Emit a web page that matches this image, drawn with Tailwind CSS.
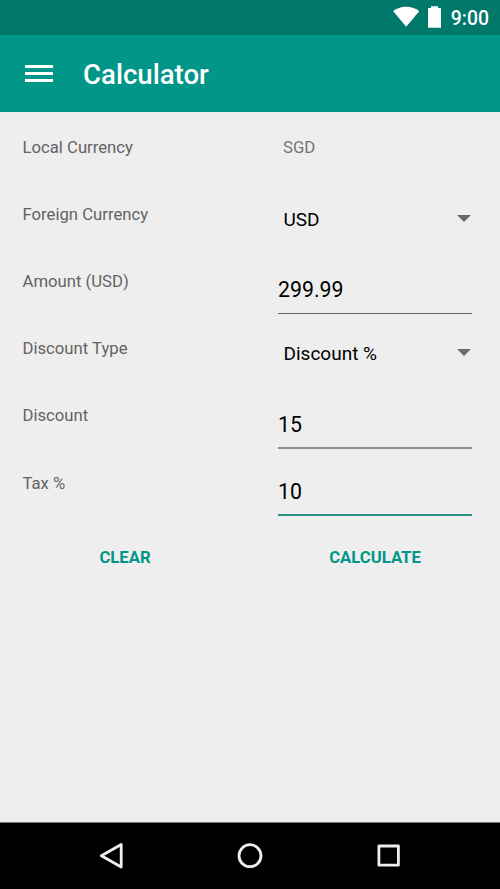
<!DOCTYPE html>
<html lang="en">
<head>
<meta charset="utf-8">
<title>Calculator</title>
<script src="https://cdn.jsdelivr.net/npm/@tailwindcss/browser@4"></script>
</head>
<body class="font-['Roboto',sans-serif]">
<div class="flex h-[889px] w-[500px] flex-col overflow-hidden bg-[#eeeeee]">
  <div class="flex h-[35px] shrink-0 items-center justify-end bg-[#00796b] pr-[11px] text-white">
    <svg class="h-[35px] w-[57px]" viewBox="0 0 57 35" fill="currentColor"><path d="M.2 11.2C3.5 8.300 8 6.700 13.200 6.700s9.700 1.600 13 4.500L13.200 26.800z"/><path d="M35 8h3V6.300h7V8h3v19.700H35z"/></svg>
    <span class="relative top-px ml-[1px] text-[19.4px] font-medium">9:00</span>
  </div>
  <header class="flex h-[77px] shrink-0 items-center bg-[#009688] pl-[25px] text-white">
    <svg class="h-[18px] w-7" viewBox="0 0 28 18" fill="currentColor"><path d="M0 0h28v3H0zM0 7h28v3H0zM0 14h28v3H0z"/></svg>
    <h1 class="relative top-px ml-[30px] text-[27.6px] font-medium">Calculator</h1>
  </header>
  <main class="flex-1">
    <div class="grid auto-rows-[67.2px] grid-cols-[255.500px_194px] pl-[22.500px] text-black">
      <div class="pt-[26px] text-[16.700px] leading-5 text-[#636363]">Local Currency</div>
      <div class="pt-[26px] pl-[5px] text-[16.700px] leading-5 text-[#757575]">SGD</div>

      <div class="pt-[26px] text-[16.700px] leading-5 text-[#636363]">Foreign Currency</div>
      <div class="flex items-center justify-between pt-[14px] pr-[1.500px] pl-[5.500px] text-[19px]"><span>USD</span><svg class="relative -top-[1.500px] h-[7px] w-[14px]" viewBox="0 0 14 7" fill="#6b6b6b"><path d="M0 0h14L7 7z"/></svg></div>

      <div class="pt-[26px] text-[16.700px] leading-5 text-[#636363]">Amount (USD)</div>
      <div class="border-b border-[#666666] pt-[31px] text-[21.300px] leading-[26px]">299.99</div>

      <div class="pt-[25.500px] text-[16.700px] leading-5 text-[#636363]">Discount Type</div>
      <div class="flex items-center justify-between pt-[14px] pr-[1.500px] pl-[5.500px] text-[19px]"><span>Discount %</span><svg class="relative -top-[1.500px] h-[7px] w-[14px]" viewBox="0 0 14 7" fill="#6b6b6b"><path d="M0 0h14L7 7z"/></svg></div>

      <div class="pt-[25.500px] text-[16.700px] leading-5 text-[#636363]">Discount</div>
      <div class="mb-[-1px] border-b-2 border-[#929292] pt-[31px] text-[21.300px] leading-[26px]">15</div>

      <div class="pt-[26px] text-[16.700px] leading-5 text-[#636363]">Tax %</div>
      <div class="mb-[-1.200px] border-b-2 border-[#2d9389] pt-[31px] text-[21.300px] leading-[26px]">10</div>
    </div>
    <div class="grid grid-cols-2 pt-[33px] text-center text-[16.700px] leading-5 font-bold text-[#009688]">
      <button>CLEAR</button>
      <button>CALCULATE</button>
    </div>
  </main>
  <nav class="grid h-[67px] shrink-0 border-t border-[#777777] bg-black">
    <svg class="h-[66px] w-[500px]" viewBox="0 823 500 66" fill="none" stroke="#eeeeee" stroke-width="2.800" stroke-linejoin="round"><path d="M101.400 855.800L121.200 844.500V867z"/><circle cx="250" cy="855.700" r="11"/><rect x="378.900" y="846" width="19.500" height="19.200"/></svg>
  </nav>
</div>
</body>
</html>
